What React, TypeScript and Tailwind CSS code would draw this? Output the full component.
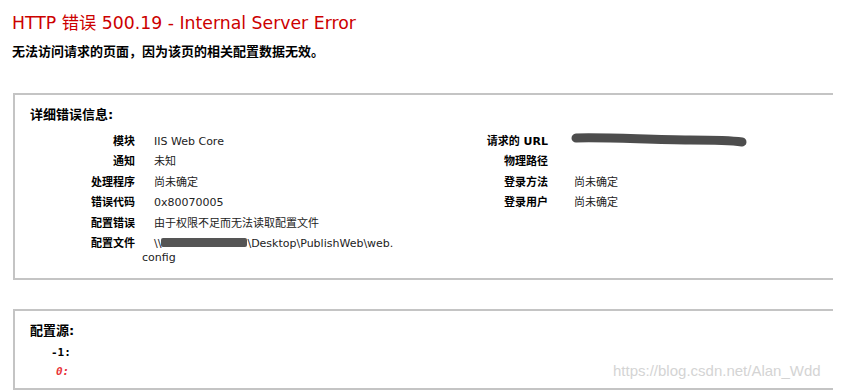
const FONT = "font-['DejaVu_Sans','Noto_Sans_CJK_SC',sans-serif]";

const LEFT_ROWS: { label: string; value: React.ReactNode }[] = [
  { label: "模块", value: "IIS Web Core" },
  { label: "通知", value: "未知" },
  { label: "处理程序", value: "尚未确定" },
  { label: "错误代码", value: "0x80070005" },
  { label: "配置错误", value: "由于权限不足而无法读取配置文件" },
  {
    label: "配置文件",
    value: (
      <>
        \\
        <span className="inline-block align-middle w-[86px] h-[9px] -mt-[2px] rounded-[2px] bg-[#555]" />
        \Desktop\PublishWeb\web.
        <span className="block -mt-[3px] -ml-[12px] leading-[14px]">config</span>
      </>
    ),
  },
];

const RIGHT_ROWS: { label: string; value: React.ReactNode }[] = [
  {
    label: "请求的 URL",
    value: (
      <svg width="180" height="18" viewBox="0 0 180 18" className="block -mt-[1px] -ml-[4px]">
        <path d="M6 7 C40 6 80 9 120 9 C150 9 165 10 172 11" stroke="#4d4d4d" strokeWidth="9" strokeLinecap="round" fill="none" />
      </svg>
    ),
  },
  { label: "物理路径", value: "" },
  { label: "登录方法", value: "尚未确定" },
  { label: "登录用户", value: "尚未确定" },
];

function InfoTable({ rows, labelW, gap }: { rows: typeof LEFT_ROWS; labelW: string; gap: string }) {
  return (
    <div className={`grid ${labelW} ${gap} auto-rows-[20.4px] text-[11px] leading-[20.4px]`}>
      {rows.map((r) => (
        <div key={r.label} className="contents">
          <div className="text-right font-bold text-black whitespace-nowrap">{r.label}</div>
          <div className="text-[#222] whitespace-nowrap">{r.value}</div>
        </div>
      ))}
    </div>
  );
}

export default function App() {
  return (
    <div className={`relative w-[841px] h-[391px] bg-white overflow-hidden ${FONT}`}>
      <div className="pl-[12px] pt-[11px]">
        <h1 className="text-[17.3px] leading-[24px] text-[#cc0000]">HTTP 错误 500.19 - Internal Server Error</h1>
        <p className="mt-[8px] text-[13px] leading-[18px] font-bold text-black">
          无法访问请求的页面，因为该页的相关配置数据无效。
        </p>
      </div>

      {/* 详细错误信息 */}
      <div className="ml-[13px] mt-[32px] w-[820px] h-[187px] border-2 border-r-0 border-[#c4c4c4] pl-[15px] pt-[11px]">
        <h2 className="text-[13px] leading-[18px] font-bold text-black">详细错误信息:</h2>
        <div className="flex mt-[8px]">
          <div className="w-[410px]">
            <InfoTable rows={LEFT_ROWS} labelW="grid-cols-[105px_auto]" gap="gap-x-[19px]" />
          </div>
          <InfoTable rows={RIGHT_ROWS} labelW="grid-cols-[108px_auto]" gap="gap-x-[26px]" />
        </div>
      </div>

      {/* 配置源 */}
      <div className="ml-[13px] mt-[29px] w-[820px] h-[81px] border-2 border-r-0 border-[#c4c4c4] pl-[15px] pt-[11px]">
        <h2 className="text-[13px] leading-[18px] font-bold text-black">配置源:</h2>
        <div className="mt-[3px] font-['DejaVu_Sans_Mono',monospace] text-[11px] leading-[19px] font-bold">
          <div className="pl-[21px] text-black">-1:</div>
          <div className="pl-[26px] text-[#e8333a] italic">0:</div>
        </div>
      </div>

      <div className="absolute left-[613px] top-[361px] font-['Liberation_Sans',sans-serif] text-[15px] leading-[20px] text-[#d4d4d4]">
        https://blog.csdn.net/Alan_Wdd
      </div>
    </div>
  );
}
